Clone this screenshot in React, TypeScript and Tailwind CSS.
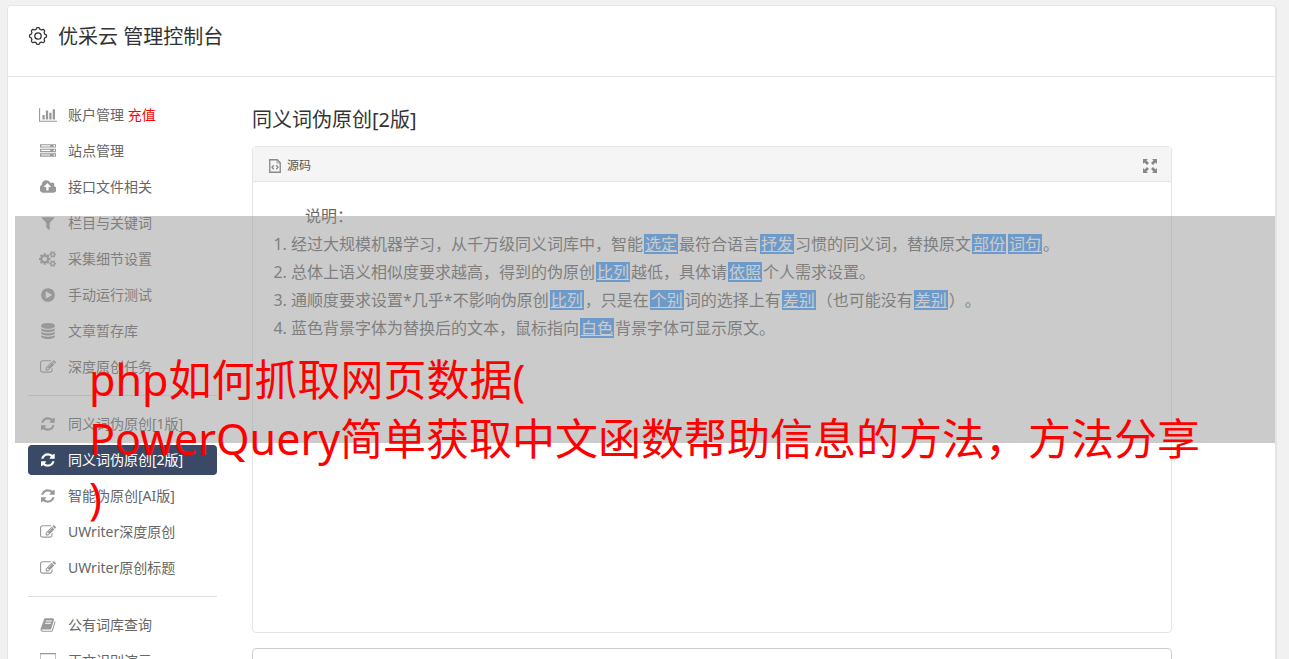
import { Fragment } from "react";

// --- UTILS ---
function cn(...classes: (string | undefined | null | false)[]) {
  return classes.filter(Boolean).join(" ");
}

// --- ICONS ---
const icons = {
  chart: {
    w: 2048,
    d: "M640 896v512h-256v-512h256zm384-512v1024h-256v-1024h256zm1024 1152v128h-2048v-1536h128v1408h1920zm-640-896v768h-256v-768h256zm384-384v1152h-256v-1152h256z",
  },
  server: {
    w: 1792,
    d: "M128 1408h1024v-128h-1024v128zm0-512h1024v-128h-1024v128zm1568 448q0-40-28-68t-68-28-68 28-28 68 28 68 68 28 68-28 28-68zm-1568-960h1024v-128h-1024v128zm1568 448q0-40-28-68t-68-28-68 28-28 68 28 68 68 28 68-28 28-68zm0-512q0-40-28-68t-68-28-68 28-28 68 28 68 68 28 68-28 28-68zm96 832v384h-1792v-384h1792zm0-512v384h-1792v-384h1792zm0-512v384h-1792v-384h1792z",
  },
  upload: {
    w: 1856,
    d: "M1216 864q0-14-9-23l-352-352q-9-9-23-9t-23 9l-351 351q-10 12-10 24 0 14 9 23t23 9h224v352q0 13 9.5 22.5t22.5 9.5h192q13 0 22.5-9.5t9.5-22.5v-352h224q13 0 22.5-9.5t9.5-22.5zm640 288q0 159-112.5 271.5t-271.5 112.5h-1088q-185 0-316.5-131.5t-131.5-316.5q0-130 70-240t188-165q-2-30-2-43 0-212 150-362t362-150q156 0 285.5 87t188.5 231q71-62 166-62 106 0 181 75t75 181q0 76-41 138 130 31 213.5 135.5t83.5 238.5z",
  },
  filter: {
    w: 1792,
    d: "M1595 295q17 41-14 70l-493 493v742q0 42-39 59-13 5-25 5-27 0-45-19l-256-256q-19-19-19-45v-486l-493-493q-31-29-14-70 17-39 59-39h1280q42 0 59 39z",
  },
  cogs: {
    w: 1920,
    d: "M896 896q0-106-75-181t-181-75-181 75-75 181 75 181 181 75 181-75 75-181zm768 512q0-52-38-90t-90-38-90 38-38 90q0 53 37.5 90.5t90.5 37.5 90.5-37.5 37.5-90.5zm0-1024q0-52-38-90t-90-38-90 38-38 90q0 53 37.5 90.5t90.5 37.5 90.5-37.5 37.5-90.5zm-384 421v185q0 10-7 19.5t-16 10.5l-155 24q-11 35-32 76 34 48 90 115 7 11 7 20 0 12-7 19-23 30-82.5 89.5t-78.5 59.5q-11 0-21-7l-115-90q-37 19-77 31-11 108-23 155-7 24-30 24h-186q-11 0-20-7.5t-10-17.5l-23-153q-34-10-75-31l-118 89q-7 7-20 7-11 0-21-8-144-133-144-160 0-9 7-19 10-14 41-53t47-61q-23-44-35-82l-152-24q-10-1-17-9.5t-7-19.5v-185q0-10 7-19.5t16-10.5l155-24q11-35 32-76-34-48-90-115-7-11-7-20 0-12 7-20 22-30 82-89t79-59q11 0 21 7l115 90q34-18 77-32 11-108 23-154 7-24 30-24h186q11 0 20 7.5t10 17.5l23 153q34 10 75 31l118-89q8-7 20-7 11 0 21 8 144 133 144 160 0 8-7 19-12 16-42 54t-45 60q23 48 34 82l152 23q10 2 17 10.5t7 19.5zm640 533v140q0 16-149 31-12 27-30 52 51 113 51 138 0 4-4 7-122 71-124 71-8 0-46-47t-52-68q-20 2-30 2t-30-2q-14 21-52 68t-46 47q-2 0-124-71-4-3-4-7 0-25 51-138-18-25-30-52-149-15-149-31v-140q0-16 149-31 13-29 30-52-51-113-51-138 0-4 4-7 4-2 35-20t59-34 30-16q8 0 46 46.5t52 67.5q20-2 30-2t30 2q51-71 92-112l6-2q4 0 124 70 4 3 4 7 0 25-51 138 17 23 30 52 149 15 149 31zm0-1024v140q0 16-149 31-12 27-30 52 51 113 51 138 0 4-4 7-122 71-124 71-8 0-46-47t-52-68q-20 2-30 2t-30-2q-14 21-52 68t-46 47q-2 0-124-71-4-3-4-7 0-25 51-138-18-25-30-52-149-15-149-31v-140q0-16 149-31 13-29 30-52-51-113-51-138 0-4 4-7 4-2 35-20t59-34 30-16q8 0 46 46.5t52 67.5q20-2 30-2t30 2q51-71 92-112l6-2q4 0 124 70 4 3 4 7 0 25-51 138 17 23 30 52 149 15 149 31z",
  },
  play: {
    w: 1792,
    d: "M896 128q209 0 385.5 103t279.5 279.5 103 385.5-103 385.5-279.5 279.5-385.5 103-385.5-103-279.5-279.5-103-385.5 103-385.5 279.5-279.5 385.5-103zm384 823q32-18 32-55t-32-55l-544-320q-31-19-64-1-32 19-32 56v640q0 37 32 56 16 8 32 8 17 0 32-9z",
  },
  database: {
    w: 1792,
    d: "M896 768q237 0 443-43t325-127v170q0 69-103 128t-280 93.5-385 34.5-385-34.5-280-93.5-103-128v-170q119 84 325 127t443 43zm0 768q237 0 443-43t325-127v170q0 69-103 128t-280 93.5-385 34.5-385-34.5-280-93.5-103-128v-170q119 84 325 127t443 43zm0-384q237 0 443-43t325-127v170q0 69-103 128t-280 93.5-385 34.5-385-34.5-280-93.5-103-128v-170q119 84 325 127t443 43zm0-1152q208 0 385 34.5t280 93.5 103 128v128q0 69-103 128t-280 93.5-385 34.5-385-34.5-280-93.5-103-128v-128q0-69 103-128t280-93.5 385-34.5z",
  },
  edit: {
    w: 1792,
    d: "M888 1184l116-116-152-152-116 116v56h96v96h56zm440-720q-16-16-33 1l-350 350q-17 17-1 33t33-1l350-350q17-17 1-33zm80 594v190q0 119-84.5 203.5t-203.5 84.5h-832q-119 0-203.5-84.5t-84.5-203.5v-832q0-119 84.5-203.5t203.5-84.5h832q63 0 117 25 15 7 18 23 3 17-9 29l-49 49q-14 14-32 8-23-6-45-6h-832q-66 0-113 47t-47 113v832q0 66 47 113t113 47h832q66 0 113-47t47-113v-126q0-13 9-22l64-64q15-15 35-7t20 29zm-96-738l288 288-672 672h-288v-288zm444 132l-92 92-288-288 92-92q28-28 68-28t68 28l152 152q28 28 28 68t-28 68z",
  },
  refresh: {
    w: 1536,
    d: "M1511 1056q0 5-1 7-64 268-268 434.5t-478 166.5q-146 0-282.5-55t-243.5-157l-129 129q-19 19-45 19t-45-19-19-45v-448q0-26 19-45t45-19h448q26 0 45 19t19 45-19 45l-137 137q71 66 161 102t187 36q134 0 250-65t186-179q11-17 53-117 8-23 30-23h192q13 0 22.5 9.5t9.5 22.5zm25-800v448q0 26-19 45t-45 19h-448q-26 0-45-19t-19-45 19-45l138-138q-148-137-349-137-134 0-250 65t-186 179q-11 17-53 117-8 23-30 23h-199q-13 0-22.5-9.5t-9.5-22.5v-7q65-268 270-434.5t480-166.5q146 0 284 55.5t245 156.5l130-129q19-19 45-19t45 19 19 45z",
  },
  book: {
    w: 1792,
    d: "M1703 478q40 57 18 129l-275 906q-19 64-76.5 107.5t-122.5 43.5h-923q-77 0-148.5-53.5t-99.5-131.5q-24-67-2-127 0-4 3-27t4-37q1-8-3-21.5t-3-19.5q2-11 8-21t16.5-23.5 16.5-23.5q23-38 45-91.5t30-91.5q3-10 .5-30t-.5-28q3-11 17-28t17-23q21-36 42-92t25-90q1-9-2.5-32t.5-28q4-13 22-30.5t22-22.5q19-26 42.5-84.5t27.5-96.5q1-8-3-25.5t-2-26.5q2-8 9-18t18-23 17-21q8-12 16.5-30.5t15-35 16-36 19.5-32 26.5-23.5 36-11.5 47.5 5.5l-1 3q38-9 51-9h761q74 0 114 56t18 130l-274 906q-36 119-71.5 153.5t-128.5 34.5h-869q-27 0-38 15-11 16-1 43 24 70 144 70h923q29 0 56-15.5t35-41.5l300-987q7-22 5-57 38 15 59 43zm-1064 2q-4 13 2 22.5t20 9.5h608q13 0 25.5-9.5t16.5-22.5l21-64q4-13-2-22.5t-20-9.5h-608q-13 0-25.5 9.5t-16.5 22.5zm-83 256q-4 13 2 22.5t20 9.5h608q13 0 25.5-9.5t16.5-22.5l21-64q4-13-2-22.5t-20-9.5h-608q-13 0-25.5 9.5t-16.5 22.5z",
  },
  desktop: {
    w: 1856,
    d: "M1728 992v-832q0-13-9.5-22.5t-22.5-9.5h-1600q-13 0-22.5 9.5t-9.5 22.5v832q0 13 9.5 22.5t22.5 9.5h1600q13 0 22.5-9.5t9.5-22.5zm128-832v1088q0 66-47 113t-113 47h-544q0 37 16 77.5t32 71 16 43.5q0 26-19 45t-45 19h-512q-26 0-45-19t-19-45q0-14 16-44t32-70 16-78h-544q-66 0-113-47t-47-113v-1088q0-66 47-113t113-47h1600q66 0 113 47t47 113z",
  },
};

type IconName = keyof typeof icons;

function Icon({ name }: { name: IconName }) {
  const { w, d } = icons[name];
  return (
    <svg viewBox={`0 0 ${w} 1792`} className="h-4 w-auto shrink-0 fill-current" aria-hidden="true">
      <path d={d} />
    </svg>
  );
}

// scalloped outline of the header gear
const gearPoints = Array.from({ length: 96 }, (_, i) => {
  const a = (i / 96) * Math.PI * 2;
  const r = 7.7 + 0.8 * Math.tanh(2 * Math.cos(8 * a));
  return `${(10 + r * Math.sin(a)).toFixed(2)},${(10 - r * Math.cos(a)).toFixed(2)}`;
}).join(" ");

function GearIcon() {
  return (
    <svg viewBox="0 0 20 20" className="size-5 fill-none stroke-current" aria-hidden="true">
      <polygon points={gearPoints} strokeWidth="1.3" strokeLinejoin="round" />
      <circle cx="10" cy="10" r="3.2" strokeWidth="1.3" />
    </svg>
  );
}

function SourceIcon() {
  return (
    <svg viewBox="0 0 12 14" className="h-3.5 w-3 fill-none stroke-current" aria-hidden="true">
      <path d="M.75.75h7.5l3 3v9.5H.75z" strokeWidth="1.3" />
      <path d="M8 1v3h3" strokeWidth="0.8" />
      <path d="M4.800 6.200 3 8.200l1.800 2M7.200 6.200l1.800 2-1.800 2" strokeWidth="1.3" />
    </svg>
  );
}

function ExpandIcon() {
  return (
    <svg viewBox="0 0 14 14" className="size-3.5 fill-current" aria-hidden="true">
      <path d="M0 0h5L3.500 1.500 6 4 4 6 1.500 3.500 0 5zM14 0v5l-1.500-1.500L10 6 8 4l2.500-2.500L9 0zM0 14V9l1.500 1.500L4 8l2 2-2.500 2.500L5 14zM14 14H9l1.500-1.500L8 10l2-2 2.500 2.500L14 9z" />
    </svg>
  );
}

// --- DATA ---
type NavItem = { name: string; icon: IconName; tag?: string; active?: boolean };

const navGroups: NavItem[][] = [
  [
    { name: "账户管理", icon: "chart", tag: "充值" },
    { name: "站点管理", icon: "server" },
    { name: "接口文件相关", icon: "upload" },
    { name: "栏目与关键词", icon: "filter" },
    { name: "采集细节设置", icon: "cogs" },
    { name: "手动运行测试", icon: "play" },
    { name: "文章暂存库", icon: "database" },
    { name: "深度原创任务", icon: "edit" },
  ],
  [
    { name: "同义词伪原创[1版]", icon: "refresh" },
    { name: "同义词伪原创[2版]", icon: "refresh", active: true },
    { name: "智能伪原创[AI版]", icon: "refresh" },
    { name: "UWriter深度原创", icon: "edit" },
    { name: "UWriter原创标题", icon: "edit" },
  ],
  [
    { name: "公有词库查询", icon: "book" },
    { name: "正文识别演示", icon: "desktop" },
  ],
];

// odd entries are the replaced words
const notes = [
  ["经过大规模机器学习，从千万级同义词库中，智能", "选定", "最符合语言", "抒发", "习惯的同义词，替换原文", "部份", "", "词句", "。"],
  ["总体上语义相似度要求越高，得到的伪原创", "比列", "越低，具体请", "依照", "个人需求设置。"],
  ["通顺度要求设置*几乎*不影响伪原创", "比列", "，只是在", "个别", "词的选择上有", "差别", "（也可能没有", "差别", "）。"],
  ["蓝色背景字体为替换后的文本，鼠标指向", "白色", "背景字体可显示原文。"],
];

function Sidebar() {
  return (
    <nav className="flex w-[189px] shrink-0 flex-col gap-1.5">
      {navGroups.map((group, i) => (
        <Fragment key={i}>
          {i > 0 && <hr className="my-[7px] border-[#dddddd]" />}
          {group.map((item) => (
            <a
              key={item.name}
              href="#"
              className={cn(
                "flex h-[30px] items-center gap-2.5 rounded px-2.5 text-sm whitespace-nowrap",
                item.active ? "bg-[#3a4a66] text-white" : "text-[#666666]"
              )}
            >
              <span className={cn("flex w-5 justify-center", !item.active && "text-[#999999]")}>
                <Icon name={item.icon} />
              </span>
              <span>
                {item.name}
                {item.tag && <span className="text-[#ff0000]"> {item.tag}</span>}
              </span>
            </a>
          ))}
        </Fragment>
      ))}
    </nav>
  );
}

// --- MAIN COMPONENT ---
export default function App() {
  return (
    <div className="relative h-screen overflow-hidden bg-[#f1f1f1] pt-[5px] pr-3 pl-[7px] font-['Noto_Sans','Noto_Sans_CJK_SC',sans-serif] text-[#333333] [text-spacing-trim:space-all]">
      <div className="min-h-screen rounded-t border border-r-2 border-[#e5e5e5] bg-white">
        {/* ── HEADER ── */}
        <header className="flex h-[71px] items-start gap-2.5 border-b border-[#e5e5e5] px-5 pt-5">
          <GearIcon />
          <h1 className="text-xl leading-[22px]">优采云 管理控制台</h1>
        </header>

        <div className="flex gap-[35px] pt-[23px] pr-[103px] pl-5">
          <Sidebar />

          {/* ── CONTENT ── */}
          <main className="min-w-0 flex-1 pt-1.5">
            <h2 className="mb-3 text-xl leading-7">同义词伪原创[2版]</h2>

            <section className="rounded border border-[#e5e5e5]">
              <div className="flex h-[35px] items-center justify-between border-b border-[#e5e5e5] bg-[#f5f5f5] pt-1 pr-3.5 pl-4 text-[#888888]">
                <span className="flex items-center gap-1.5">
                  <SourceIcon />
                  <span className="text-xs text-[#555555]">源码</span>
                </span>
                <button type="button" aria-label="全屏">
                  <ExpandIcon />
                </button>
              </div>
              <div className="min-h-[450px] p-5 text-base leading-7 text-[#666666]">
                <p className="indent-8">说明：</p>
                <ol className="list-decimal pl-[18px]">
                  {notes.map((parts, i) => (
                    <li key={i}>
                      {parts.map((part, j) =>
                        j % 2 ? (
                          <span key={j} className="mx-px inline-block bg-[#439df9] px-px leading-5 text-white underline">
                            {part}
                          </span>
                        ) : (
                          part
                        )
                      )}
                    </li>
                  ))}
                </ol>
              </div>
            </section>

            <textarea
              aria-label="原文"
              rows={8}
              className="mt-[15px] block w-full resize-none rounded border border-[#cccccc] bg-white p-3 outline-none"
            />
          </main>
        </div>
      </div>

      {/* ── CAPTION BAND ── */}
      <div className="pointer-events-none absolute top-[216px] right-3.5 left-[15px] h-[227px] bg-[#979797]/50 pt-[134px] pl-[74px] text-[43px] leading-[59px] whitespace-nowrap text-[#ff0000]">
        <p>php如何抓取网页数据(</p>
        <p>PowerQuery简单获取中文函数帮助信息的方法，方法分享</p>
        <p>)</p>
      </div>
    </div>
  );
}
